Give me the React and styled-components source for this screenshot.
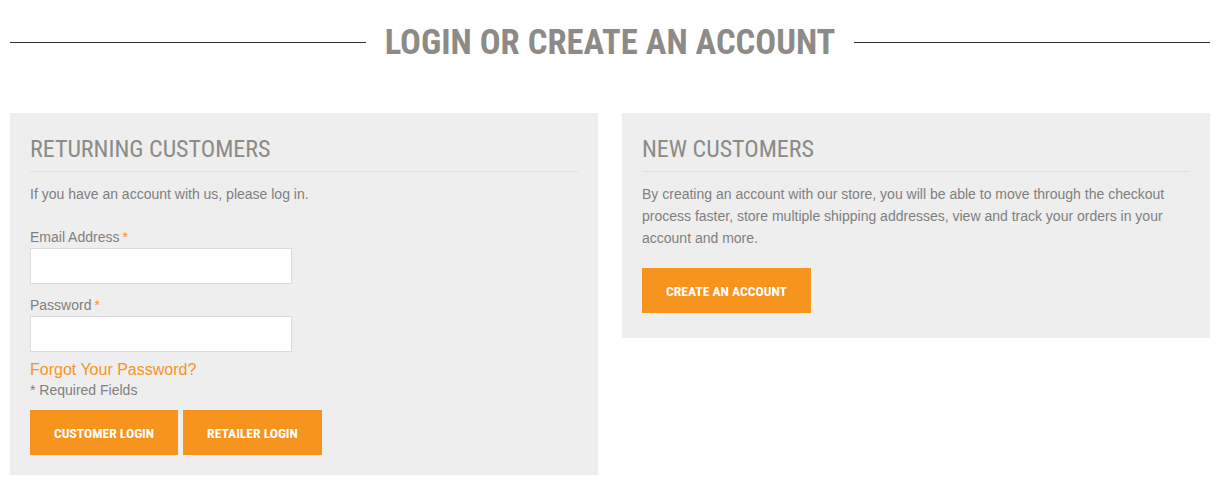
import React from 'react';
import styled, { createGlobalStyle } from 'styled-components';

const GlobalStyle = createGlobalStyle`
  body {
    margin: 0;
    background: #fff;
    font-family: "Liberation Sans", Arial, sans-serif;
  }
`;

const Page = styled.div`
  padding: 0 16px 0 10px;
`;

const TitleRow = styled.div`
  display: flex;
  align-items: center;
  gap: 19px;
  padding-top: 18px;
  height: 48px;
`;

const Rule = styled.span`
  flex: 1;
  height: 1px;
  background: #333;
`;

const Title = styled.h1`
  margin: 0;
  font-family: "Roboto Condensed", "Roboto", sans-serif;
  font-weight: 700;
  font-size: 34.6px;
  line-height: 48px;
  color: #8c8b87;
  text-transform: uppercase;
`;

const Columns = styled.div`
  display: grid;
  grid-template-columns: 1fr 1fr;
  gap: 24px;
  align-items: start;
  margin-top: 47px;
`;

const Panel = styled.section`
  background: #eeeeee;
  padding: 23px 20px ${({ $bottom }) => $bottom}px;
`;

const PanelTitle = styled.h2`
  margin: 0;
  padding-bottom: 9px;
  border-bottom: 1px solid #e0e0e0;
  font-family: "Roboto Condensed", "Roboto", sans-serif;
  font-weight: 400;
  font-size: 24px;
  line-height: 26px;
  color: #8c8b87;
  text-transform: uppercase;
`;

const Text = styled.p`
  margin: 11px 0 0;
  font-size: 14px;
  line-height: 22px;
  color: #7f7f7f;
`;

const Field = styled.div`
  margin-top: ${({ $top }) => $top}px;
`;

const Label = styled.label`
  display: block;
  font-size: 14px;
  line-height: 18px;
  color: #7f7f7f;
  margin-bottom: 2px;
`;

const Star = styled.span`
  color: #f7941e;
  margin-left: 3px;
`;

const Input = styled.input`
  display: block;
  box-sizing: border-box;
  width: 262px;
  height: 36px;
  border: 1px solid #dcdcdc;
  background: #fff;
  outline: none;
`;

const Forgot = styled.a`
  display: block;
  margin-top: 8px;
  font-size: 16px;
  line-height: 20px;
  color: #f7941e;
  text-decoration: none;
`;

const Required = styled.div`
  font-size: 14px;
  line-height: 20px;
  color: #7f7f7f;
`;

const Buttons = styled.div`
  display: flex;
  gap: 5px;
  margin-top: ${({ $top }) => $top}px;
`;

const Button = styled.button`
  height: 45px;
  padding: 0 24px;
  border: none;
  background: #f7941e;
  color: #fff;
  font-family: "Roboto Condensed", "Roboto", sans-serif;
  font-weight: 700;
  font-size: 13.6px;
  text-transform: uppercase;
  cursor: pointer;
`;

export default function App() {
  return (
    <Page>
      <GlobalStyle />
      <TitleRow>
        <Rule />
        <Title>Login or Create an Account</Title>
        <Rule />
      </TitleRow>
      <Columns>
        <Panel $bottom={20}>
          <PanelTitle>Returning Customers</PanelTitle>
          <Text>If you have an account with us, please log in.</Text>
          <Field $top={23}>
            <Label>Email Address<Star>*</Star></Label>
            <Input type="email" />
          </Field>
          <Field $top={12}>
            <Label>Password<Star>*</Star></Label>
            <Input type="password" />
          </Field>
          <Forgot href="#">Forgot Your Password?</Forgot>
          <Required>* Required Fields</Required>
          <Buttons $top={10}>
            <Button>Customer Login</Button>
            <Button>Retailer Login</Button>
          </Buttons>
        </Panel>
        <Panel $bottom={25}>
          <PanelTitle>New Customers</PanelTitle>
          <Text>
            By creating an account with our store, you will be able to move through the checkout
            process faster, store multiple shipping addresses, view and track your orders in your
            account and more.
          </Text>
          <Buttons $top={19}>
            <Button>Create an Account</Button>
          </Buttons>
        </Panel>
      </Columns>
    </Page>
  );
}
